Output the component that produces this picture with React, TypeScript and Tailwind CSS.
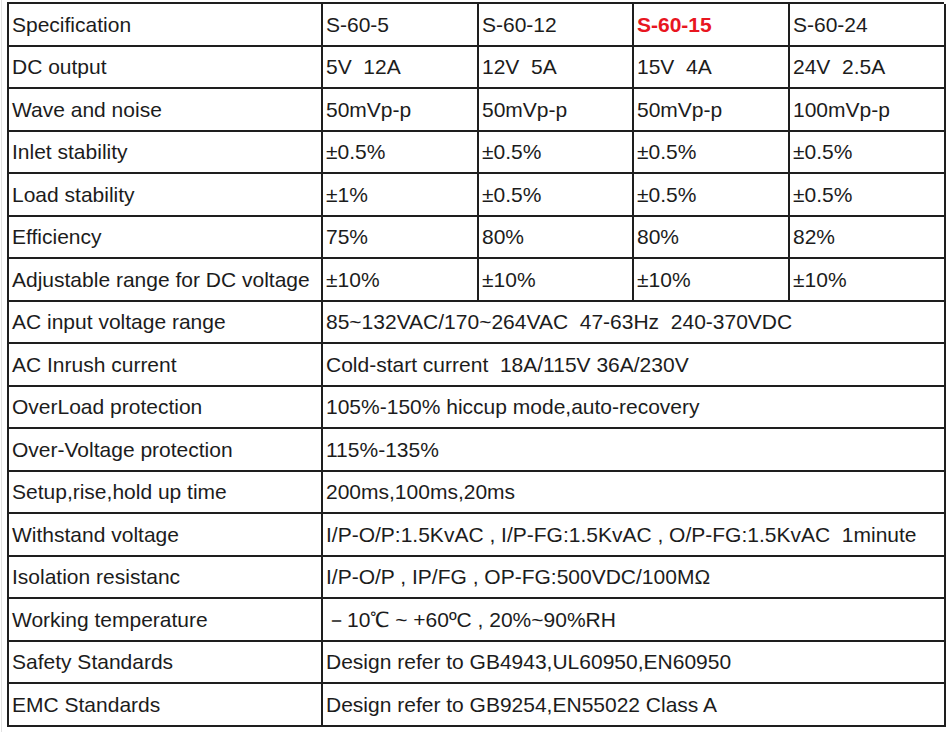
const ROWS: { label: string; values: string[] }[] = [
  { label: "DC output", values: ["5V  12A", "12V  5A", "15V  4A", "24V  2.5A"] },
  { label: "Wave and noise", values: ["50mVp-p", "50mVp-p", "50mVp-p", "100mVp-p"] },
  { label: "Inlet stability", values: ["±0.5%", "±0.5%", "±0.5%", "±0.5%"] },
  { label: "Load stability", values: ["±1%", "±0.5%", "±0.5%", "±0.5%"] },
  { label: "Efficiency", values: ["75%", "80%", "80%", "82%"] },
  { label: "Adjustable range for DC voltage", values: ["±10%", "±10%", "±10%", "±10%"] },
  { label: "AC input voltage range", values: ["85~132VAC/170~264VAC  47-63Hz  240-370VDC"] },
  { label: "AC Inrush current", values: ["Cold-start current  18A/115V 36A/230V"] },
  { label: "OverLoad protection", values: ["105%-150% hiccup mode,auto-recovery"] },
  { label: "Over-Voltage protection", values: ["115%-135%"] },
  { label: "Setup,rise,hold up time", values: ["200ms,100ms,20ms"] },
  { label: "Withstand voltage", values: ["I/P-O/P:1.5KvAC , I/P-FG:1.5KvAC , O/P-FG:1.5KvAC  1minute"] },
  { label: "Isolation resistanc", values: ["I/P-O/P , IP/FG , OP-FG:500VDC/100MΩ"] },
  { label: "Working temperature", values: ["－10℃ ~ +60ºC , 20%~90%RH"] },
  { label: "Safety Standards", values: ["Design refer to GB4943,UL60950,EN60950"] },
  { label: "EMC Standards", values: ["Design refer to GB9254,EN55022 Class A"] },
];

const MODELS = ["S-60-5", "S-60-12", "S-60-15", "S-60-24"];

const cell = "flex items-center pl-[3px] border-r-2 border-b-2 border-[#1e1e1e] whitespace-pre overflow-hidden";

export default function App() {
  return (
    <div className="w-[950px] h-[732px] bg-white overflow-hidden">
      <div className="ml-[1px] h-full border-l border-[#e2e2e2] pl-[5px] pt-[2px]">
        <div
          className="grid grid-cols-[314px_156px_155px_156px_156px] auto-rows-[42.5px] w-[937px] border-l-2 border-t-2 border-[#1e1e1e] text-[21px] text-[#1c1c1c] leading-none"
          style={{ fontFamily: '"Liberation Sans", Arial, sans-serif' }}
        >
          <div className={cell}>Specification</div>
          {MODELS.map((m) => (
            <div
              key={m}
              className={`${cell} ${m === "S-60-15" ? "text-[#e8161f] font-bold" : ""}`}
            >
              {m}
            </div>
          ))}
          {ROWS.map((r) => (
            <div key={r.label} className="contents">
              <div className={cell}>{r.label}</div>
              {r.values.length === 1 ? (
                <div className={`${cell} col-span-4`}>{r.values[0]}</div>
              ) : (
                r.values.map((v, i) => (
                  <div key={i} className={cell}>{v}</div>
                ))
              )}
            </div>
          ))}
        </div>
      </div>
    </div>
  );
}
